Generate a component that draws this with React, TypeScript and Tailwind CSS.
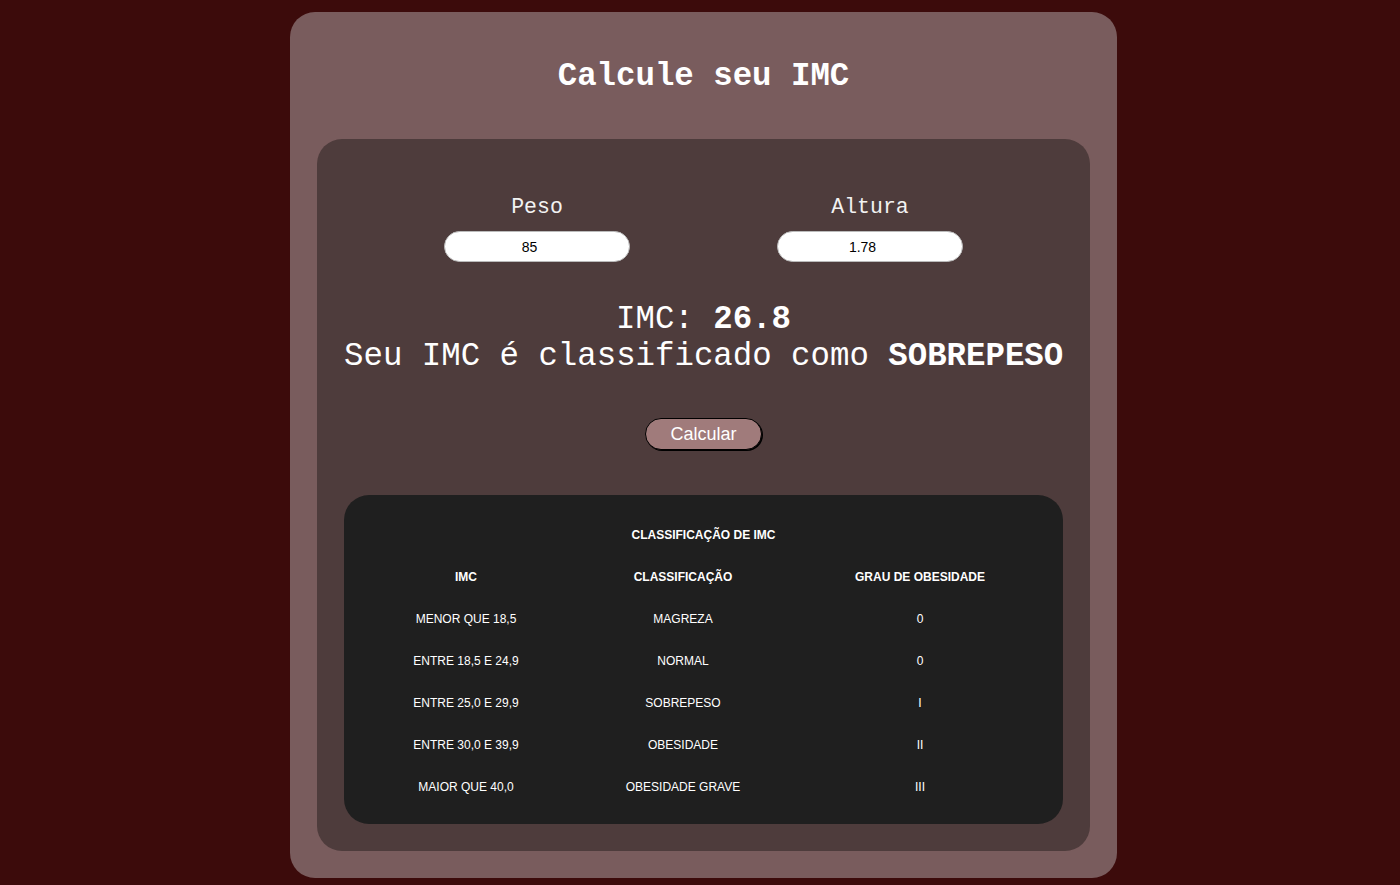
import React from "react";

const rows = [
    ["MENOR QUE 18,5", "MAGREZA", "0"],
    ["ENTRE 18,5 E 24,9", "NORMAL", "0"],
    ["ENTRE 25,0 E 29,9", "SOBREPESO", "I"],
    ["ENTRE 30,0 E 39,9", "OBESIDADE", "II"],
    ["MAIOR QUE 40,0", "OBESIDADE GRAVE", "III"],
];

const mono = { fontFamily: '"Liberation Mono", "Courier New", monospace' };
const sans = { fontFamily: '"Liberation Sans", Arial, sans-serif' };

const App = () => {
    return (
        <div className="min-h-screen bg-[#3c0b0b] flex justify-center pl-[7px] pt-3 pb-[7px]">
            <div className="w-[827px] bg-[#795c5d] rounded-[25px] px-[27px] pt-[45px] pb-[27px]">
                <h1
                    style={mono}
                    className="text-white text-[32.4px] font-bold leading-[40px] text-center"
                >
                    Calcule seu IMC
                </h1>

                <div className="mt-[42px] bg-[#4e3c3c] rounded-[25px] px-[27px] pt-[56px] pb-[27px]">
                    <div className="flex justify-center gap-[147px]">
                        {[
                            ["Peso", "85"],
                            ["Altura", "1.78"],
                        ].map(([label, value]) => (
                            <div key={label} className="flex flex-col items-center">
                                <label style={mono} className="text-[#f2f2f2] text-[21.5px] leading-[25px]">
                                    {label}
                                </label>
                                <input
                                    type="number"
                                    defaultValue={value}
                                    style={sans}
                                    className="mt-[11px] w-[186px] h-[31px] rounded-full bg-white border border-[#bbbbbb] text-center text-[14px] text-black outline-none"
                                />
                            </div>
                        ))}
                    </div>

                    <div style={mono} className="mt-[39px] text-center text-white text-[32.4px] leading-[37px]">
                        <p>
                            IMC: <b>26.8</b>
                        </p>
                        <p className="whitespace-nowrap">
                            Seu IMC é classificado como <b>SOBREPESO</b>
                        </p>
                    </div>

                    <div className="mt-[43px] flex justify-center">
                        <button
                            style={sans}
                            className="w-[117px] h-[32px] rounded-full bg-[#a07b7b] border border-black shadow-[1px_1px_0_#000] text-white text-[18px]"
                        >
                            Calcular
                        </button>
                    </div>

                    <div style={sans} className="mt-[45px] bg-[#1f1f1f] rounded-[25px] pt-[19px] pb-[16px] text-white text-[12px]">
                        <div className="h-[42px] flex items-center justify-center font-bold">
                            CLASSIFICAÇÃO DE IMC
                        </div>
                        <div className="grid grid-cols-[212px_222px_252px] ml-4 font-bold">
                            <div className="h-[42px] flex items-center justify-center">IMC</div>
                            <div className="h-[42px] flex items-center justify-center">CLASSIFICAÇÃO</div>
                            <div className="h-[42px] flex items-center justify-center">GRAU DE OBESIDADE</div>
                        </div>
                        {rows.map((r) => (
                            <div key={r[0]} className="grid grid-cols-[212px_222px_252px] ml-4">
                                {r.map((c, i) => (
                                    <div key={i} className="h-[42px] flex items-center justify-center">
                                        {c}
                                    </div>
                                ))}
                            </div>
                        ))}
                    </div>
                </div>
            </div>
        </div>
    );
};

export default App;
